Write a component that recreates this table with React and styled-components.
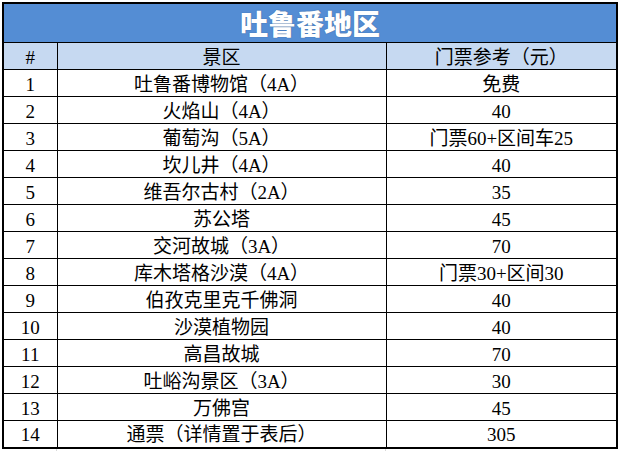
import styled, { createGlobalStyle } from "styled-components";

const GlobalStyle = createGlobalStyle`
	html, body {
		margin: 0;
		padding: 0;
		background: #ffffff;
	}
	body {
		font-family: "Liberation Serif", "Noto Sans CJK SC", serif;
	}
`;

const Sheet = styled.div`
	padding: 2px 0 0 2px;
	width: 620px;
	height: 451px;
	box-sizing: border-box;
	overflow: hidden;
`;

const Table = styled.table`
	border-collapse: collapse;
	width: 614px;
	table-layout: fixed;
	border: 2px solid #000;
	color: #000;

	td,
	th {
		border: 1px solid #000;
		padding: 2px 0 0;
		text-align: center;
		font-weight: 400;
		font-size: 19px;
		line-height: 1;
	}
`;

const Col = styled.col`
	width: ${(props) => props.w}px;
`;

const TitleCell = styled.th`
	height: 38px;
	background: #548dd4;
	color: #fff;
	font-family: "Noto Sans CJK SC", sans-serif;
	&& {
		font-size: 28px;
		font-weight: 900;
		padding: 0 0 0 0;
	}
	text-shadow: 0 0 1px #2a4f80;
`;

const HeadRow = styled.tr`
	height: 27px;
	background: #c6d9f1;
`;

const Row = styled.tr`
	height: 27px;
`;

// light excel gridlines peeking out below the table
const GridTail = styled.div`
	display: flex;
	height: 6px;
`;

const GridCell = styled.div`
	width: ${(props) => props.w}px;
	border-right: 1px solid #d9d9d9;
	box-sizing: border-box;
`;

const rows = [
	["1", "吐鲁番博物馆（4A）", "免费"],
	["2", "火焰山（4A）", "40"],
	["3", "葡萄沟（5A）", "门票60+区间车25"],
	["4", "坎儿井（4A）", "40"],
	["5", "维吾尔古村（2A）", "35"],
	["6", "苏公塔", "45"],
	["7", "交河故城（3A）", "70"],
	["8", "库木塔格沙漠（4A）", "门票30+区间30"],
	["9", "伯孜克里克千佛洞", "40"],
	["10", "沙漠植物园", "40"],
	["11", "高昌故城", "70"],
	["12", "吐峪沟景区（3A）", "30"],
	["13", "万佛宫", "45"],
	["14", "通票（详情置于表后）", "305"],
];

export default function App() {
	return (
		<Sheet>
			<GlobalStyle />
			<Table>
				<colgroup>
					<Col w={54} />
					<Col w={329} />
					<Col w={231} />
				</colgroup>
				<thead>
					<tr>
						<TitleCell colSpan={3}>吐鲁番地区</TitleCell>
					</tr>
					<HeadRow>
						<th>#</th>
						<th>景区</th>
						<th>门票参考（元）</th>
					</HeadRow>
				</thead>
				<tbody>
					{rows.map(([n, name, price]) => (
						<Row key={n}>
							<td>{n}</td>
							<td>{name}</td>
							<td>{price}</td>
						</Row>
					))}
				</tbody>
			</Table>
			<GridTail>
				<GridCell w={55} />
				<GridCell w={329} />
			</GridTail>
		</Sheet>
	);
}
